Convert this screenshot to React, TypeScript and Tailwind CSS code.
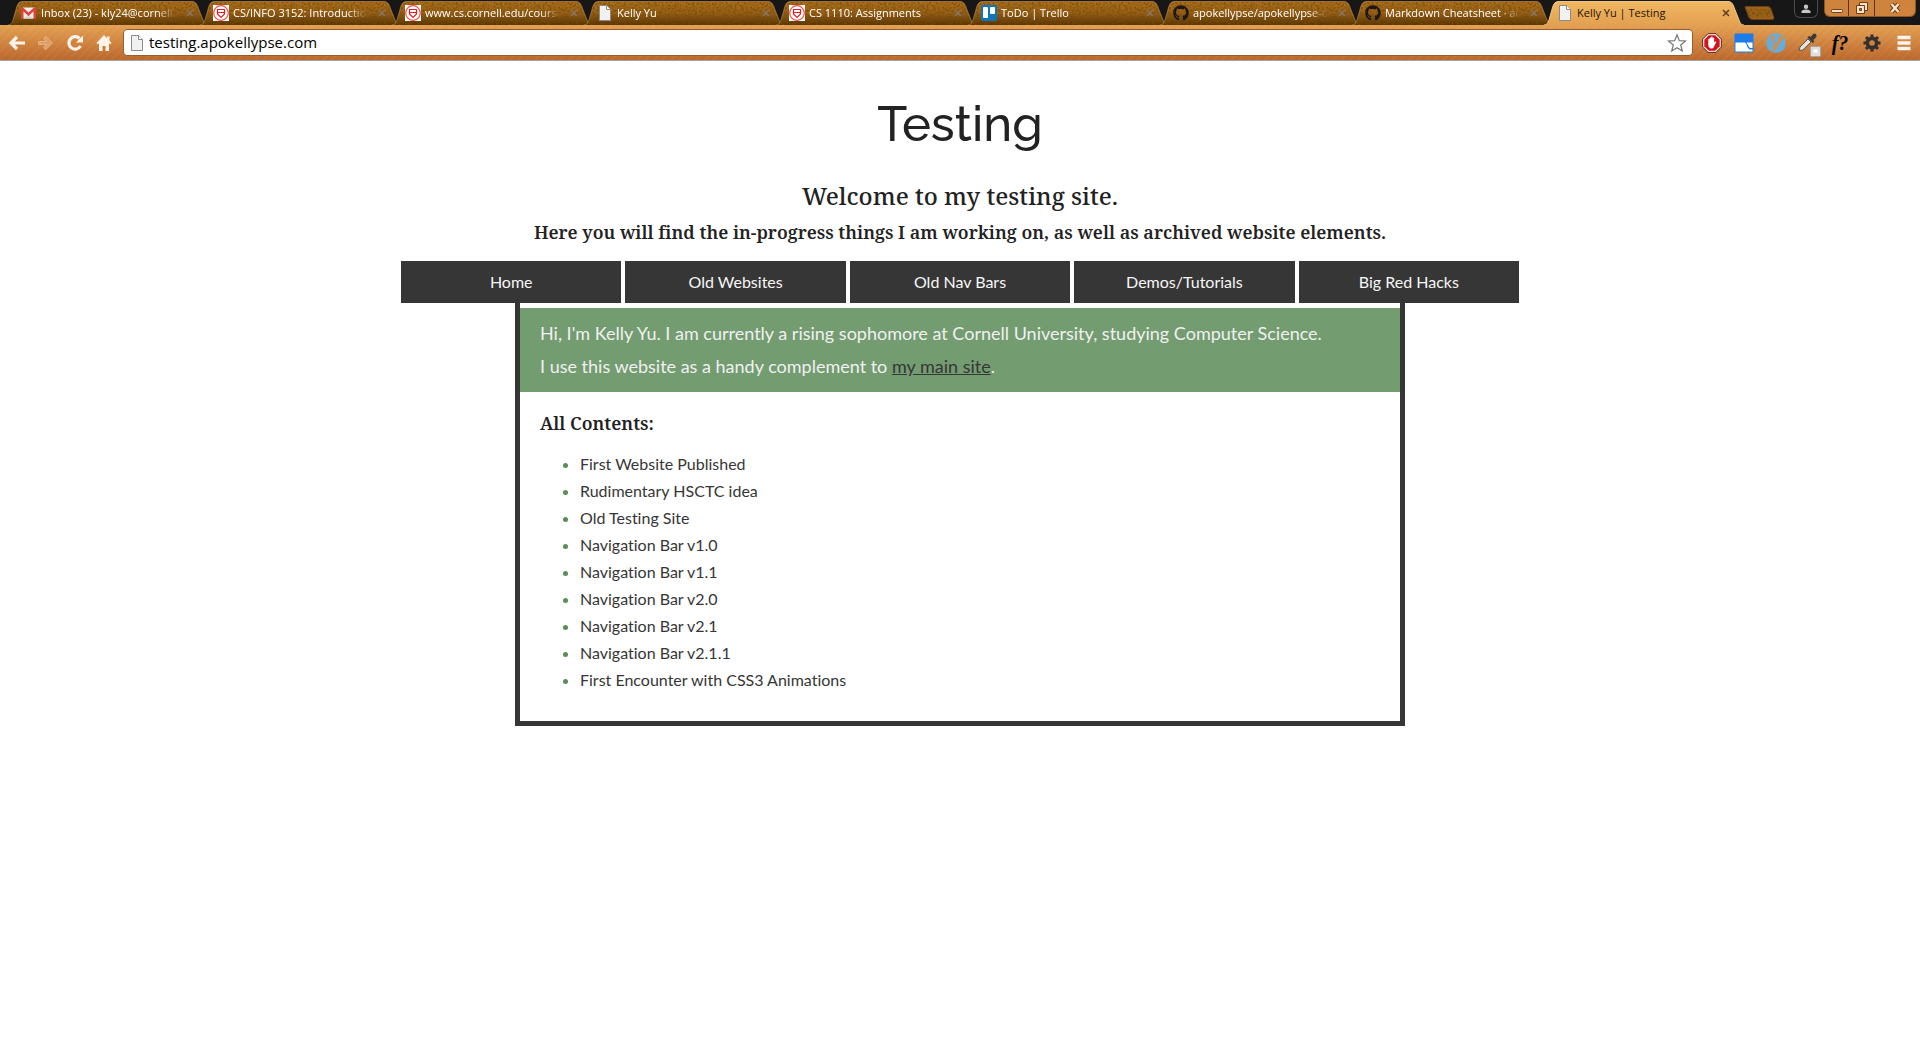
import { useState, type ReactNode } from "react";
import { FaGithub } from "react-icons/fa";

type Kind = "gmail" | "cornell" | "page" | "trello" | "github";

const TABS: { title: string; icon: Kind }[] = [
  { title: "Inbox (23) - kly24@cornell.edu", icon: "gmail" },
  { title: "CS/INFO 3152: Introduction to Game", icon: "cornell" },
  { title: "www.cs.cornell.edu/courses/cs1110", icon: "cornell" },
  { title: "Kelly Yu", icon: "page" },
  { title: "CS 1110: Assignments", icon: "cornell" },
  { title: "ToDo | Trello", icon: "trello" },
  { title: "apokellypse/apokellypse-org", icon: "github" },
  { title: "Markdown Cheatsheet · adam-p", icon: "github" },
  { title: "Kelly Yu | Testing", icon: "page" },
];

const NAV = ["Home", "Old Websites", "Old Nav Bars", "Demos/Tutorials", "Big Red Hacks"];

const CONTENTS = [
  "First Website Published",
  "Rudimentary HSCTC idea",
  "Old Testing Site",
  "Navigation Bar v1.0",
  "Navigation Bar v1.1",
  "Navigation Bar v2.0",
  "Navigation Bar v2.1",
  "Navigation Bar v2.1.1",
  "First Encounter with CSS3 Animations",
];

function PageIcon() {
  return (
    <svg viewBox="0 0 16 16" className="size-4 shrink-0" aria-hidden="true">
      <path d="M2.500 .5h7l4 4v11h-11z" fill="#f1f1f1" stroke="#8a8a8a" />
      <path d="M9.500 .5v4h4" fill="#fff" stroke="#8a8a8a" />
    </svg>
  );
}

function Favicon({ kind }: { kind: Kind }) {
  if (kind === "page") return <PageIcon />;
  if (kind === "github") return <FaGithub className="size-4 shrink-0 text-[#1b1817]" aria-hidden="true" />;
  if (kind === "gmail")
    return (
      <svg viewBox="0 0 16 16" className="size-4 shrink-0" aria-hidden="true">
        <path d="M1 2.5h13v11H1z" fill="#f2eeee" />
        <path d="M3 13.500 7.500 8l4.500 5.500" fill="#dedada" />
        <path d="M0 3.500Q0 2 1.500 2L7.500 7.600 13.500 2Q15 2 15 3.500V14h-2.500V6.500L7.500 11 2.500 6.500V14H0z" fill="#d9453a" />
      </svg>
    );
  if (kind === "trello")
    return (
      <svg viewBox="0 0 16 16" className="size-4 shrink-0" aria-hidden="true">
        <rect width="16" height="16" rx="2" fill="#0f75b5" />
        <rect x="2" y="2" width="5" height="11" rx="1" fill="#fff" />
        <rect x="9" y="2" width="5" height="7" rx="1" fill="#fff" />
      </svg>
    );
  return (
    <svg viewBox="0 0 16 16" className="size-4 shrink-0" aria-hidden="true">
      <rect width="16" height="16" fill="#fff" />
      <circle cx="8" cy="8" r="7.300" fill="#fff" stroke="#f04a48" strokeWidth="1.200" />
      <path d="M4.500 4.500h7v4.500L8 12.500 4.500 9z" fill="#fff" stroke="#e01f22" strokeWidth="1.200" />
      <path d="M4.500 7.500h7" fill="none" stroke="#e01f22" strokeWidth="1.100" />
    </svg>
  );
}

const TAB_SHAPE = "M0 24C3 24 4 22 5 19L9 5Q10.500 0.500 14 0.500H184Q188 0.500 189.500 5L195 19C196 22 197 24 200 24";

function Tab({ title, icon, active, onSelect }: { title: string; icon: Kind; active: boolean; onSelect: () => void }) {
  return (
    <div className={active ? "relative z-10 h-6 w-48 min-w-0" : "relative h-6 w-48 min-w-0"}>
      <svg
        viewBox="0 0 200 24"
        preserveAspectRatio="none"
        className="absolute top-0 left-0 h-6 w-[calc(100%+8px)]"
        aria-hidden="true"
      >
        <path d={TAB_SHAPE} fill={active ? "url(#tab-active)" : "url(#tab-idle)"} />
        {!active && (
          <g clipPath="url(#tab-clip)">
            <rect width="200" height="24" filter="url(#grain)" opacity="0.8" />
          </g>
        )}
        <path
          d={TAB_SHAPE}
          fill="none"
          stroke={active ? "#f8cf93" : "#c08c50"}
          strokeOpacity={active ? 0.9 : 0.6}
        />
      </svg>
      <div className="relative flex h-full items-center gap-1 pr-0 pl-[13px]">
        <Favicon kind={icon} />
        <button
          type="button"
          onClick={onSelect}
          className={
            active
              ? "min-w-0 flex-1 overflow-hidden text-left text-[11px] leading-5 whitespace-nowrap text-[#241505]"
              : "min-w-0 flex-1 overflow-hidden mask-r-from-85% mask-r-to-100% text-left text-[11px] leading-5 whitespace-nowrap text-white"
          }
        >
          {title}
        </button>
        <button type="button" aria-label={`Close ${title}`} className="flex w-5 justify-center">
          <svg viewBox="0 0 8 8" className="size-2" aria-hidden="true">
            <path d="M1 1l6 6M7 1l-6 6" stroke={active ? "#5c4024" : "#857565"} strokeWidth="1.600" />
          </svg>
        </button>
      </div>
    </div>
  );
}

function ToolButton({ label, children }: { label: string; children: ReactNode }) {
  return (
    <button type="button" aria-label={label} className="flex size-5 shrink-0 items-center justify-center">
      {children}
    </button>
  );
}

function BrowserChrome() {
  const [current, setCurrent] = useState(8);
  return (
    <header className="font-['Open_Sans',sans-serif]">
      <svg className="absolute size-0" aria-hidden="true">
        <defs>
          <linearGradient id="tab-idle" x1="0" y1="0" x2="0" y2="1">
            <stop offset="0" stopColor="#b0701f" />
            <stop offset="0.500" stopColor="#9a5e1a" />
            <stop offset="1" stopColor="#573007" />
          </linearGradient>
          <linearGradient id="tab-active" x1="0" y1="0" x2="0" y2="1">
            <stop offset="0" stopColor="#f1b760" />
            <stop offset="1" stopColor="#e3a052" />
          </linearGradient>
          <clipPath id="tab-clip">
            <path d={TAB_SHAPE} />
          </clipPath>
          <filter id="grain" x="0" y="0" width="1" height="1">
            <feTurbulence type="fractalNoise" baseFrequency="0.450" numOctaves="2" seed="4" />
            <feColorMatrix values="0 0 0 0 0.160  0 0 0 0 0.080  0 0 0 0 0  2.600 0 0 0 -1" />
          </filter>
        </defs>
      </svg>

      <div className="flex h-[25px] items-start bg-[#171717] pl-2">
        <div className="flex min-w-0 pt-px">
          {TABS.map((tab, i) => (
            <Tab key={i} {...tab} active={i === current} onSelect={() => setCurrent(i)} />
          ))}
        </div>
        <button type="button" aria-label="New tab" className="mt-1.5 ml-2 shrink-0">
          <svg viewBox="0 0 31 14" className="h-3.5 w-[31px]" aria-hidden="true">
            <path d="M1 1Q1 .5 2 .5H24Q26 .5 27 3L30 12Q30 13.500 28 13.500H9Q6 13.500 5 11.500Z" fill="#9a601c" stroke="#6d4310" />
            <path d="M3 3h21l3 8H7z" filter="url(#grain)" opacity="0.700" />
          </svg>
        </button>
        <div className="ml-auto flex shrink-0 pr-1">
          <button
            type="button"
            aria-label="Profile"
            className="mr-1.5 flex h-[18px] w-6 items-center justify-center rounded-b-md border border-t-0 border-[#4c4c4c] bg-[#161616]"
          >
            <svg viewBox="0 0 10 10" className="size-2.5" aria-hidden="true">
              <circle cx="5" cy="2.700" r="2.200" fill="#c6c6c6" />
              <path d="M.5 9V7.500Q1 5.500 5 5.500t4.500 2V9z" fill="#c6c6c6" />
            </svg>
          </button>
          <div className="flex h-[17px] overflow-hidden rounded-b-md border border-t-0 border-[#8d5425] bg-[#cf843e]">
            <button type="button" aria-label="Minimize" className="flex w-6 items-center justify-center border-r border-[#5b3516]">
              <svg viewBox="0 0 12 12" className="size-3" aria-hidden="true">
                <rect x=".5" y="7.500" width="11" height="3" rx="1" fill="#f9e3c9" stroke="#6a3f1d" />
              </svg>
            </button>
            <button type="button" aria-label="Restore" className="flex w-[26px] items-center justify-center border-r border-[#5b3516]">
              <svg viewBox="0 0 14 14" className="size-3.5" aria-hidden="true">
                <path d="M4.500 1.500h8v8h-8z" fill="#f9e3c9" stroke="#6a3f1d" />
                <path d="M1.500 4.500h8v8h-8z" fill="#f9e3c9" stroke="#6a3f1d" />
                <path d="M4.500 7.500h2v2h-2z" fill="#cf843e" stroke="#6a3f1d" />
              </svg>
            </button>
            <button type="button" aria-label="Close window" className="flex w-10 items-center justify-center">
              <svg viewBox="0 0 12 12" className="size-3" aria-hidden="true">
                <path d="M2.500 2 9.500 10M9.500 2 2.500 10" stroke="#6a3f1d" strokeWidth="4.200" />
                <path d="M2.500 2 9.500 10M9.500 2 2.500 10" stroke="#f9e3c9" strokeWidth="2.400" />
              </svg>
            </button>
          </div>
        </div>
      </div>

      <div className="flex h-9 items-center border-b border-[#a8a09a] bg-[repeating-linear-gradient(135deg,rgba(255,255,255,0.04)_0px,rgba(255,255,255,0.04)_2px,transparent_2px,transparent_6px),linear-gradient(#e3a052,#bb672c)] pr-1.5 pl-[7px]">
        <div className="flex shrink-0 gap-[9px] pr-[9px]">
          <ToolButton label="Back">
            <svg viewBox="0 0 20 20" className="size-5" aria-hidden="true">
              <path d="M10 4 4 10l6 6M4 10h14" fill="none" stroke="#fdf3ea" strokeWidth="3.200" />
            </svg>
          </ToolButton>
          <ToolButton label="Forward">
            <svg viewBox="0 0 20 20" className="size-5" aria-hidden="true">
              <path d="M2.500 8.500h8l-3-3 2.200-2.200 6.800 6.700-6.800 6.700-2.200-2.200 3-3h-8z" fill="#dd9f66" stroke="#e6b383" />
            </svg>
          </ToolButton>
          <ToolButton label="Reload">
            <svg viewBox="0 0 20 20" className="size-5" aria-hidden="true">
              <path d="M15.500 13A6.200 6.200 0 1 1 14.500 5.500" fill="none" stroke="#fdf3ea" strokeWidth="3.200" />
              <path d="M18 2.500V9.500H11z" fill="#fdf3ea" />
            </svg>
          </ToolButton>
          <ToolButton label="Home">
            <svg viewBox="0 0 20 20" className="size-5" aria-hidden="true">
              <path d="M10 2 2.500 10l1.200 1.200L5 10v8h3.500v-5h3v5H15v-8l1.300 1.200L17.500 10 15.500 7.800V3.500H13v1.700z" fill="#fdf3ea" />
            </svg>
          </ToolButton>
        </div>
        <div className="flex h-[27px] min-w-0 flex-1 items-center gap-1 rounded-sm border border-[#9a5c2c] bg-white px-[5px]">
          <PageIcon />
          <input
            type="text"
            aria-label="Address"
            defaultValue="testing.apokellypse.com"
            className="min-w-0 flex-1 bg-transparent pb-0.5 text-[15px] leading-5 text-black outline-none"
          />
          <button type="button" aria-label="Bookmark this page" className="shrink-0">
            <svg viewBox="0 0 20 20" className="size-5" aria-hidden="true">
              <path d="M10 1.800l2.300 5.800 6.200.4-4.800 4 1.600 6L10 14.700 4.700 18l1.600-6-4.800-4 6.200-.4z" fill="#fff" stroke="#777" strokeWidth="1.200" />
            </svg>
          </button>
        </div>
        <div className="flex shrink-0 gap-3 pl-[9px]">
          <ToolButton label="AdBlock">
            <svg viewBox="0 0 20 20" className="size-5" aria-hidden="true">
              <path d="M6 .7h8L19.300 6v8L14 19.300H6L.7 14V6z" fill="#fff" stroke="#5d2018" />
              <path d="M6.700 2.300h6.600l4.400 4.400v6.600l-4.400 4.400H6.700l-4.400-4.400V6.700z" fill="#d3151b" />
              <path d="M6.300 6.200q.7-.7 1.300 0V5q.7-.9 1.400 0V4q.8-.9 1.600 0v1q.8-.8 1.500 0v4.500l1.200-1.200q1 0 .9 1l-2.400 4.700q-.5 1.500-2 1.500H8.500Q6.300 15 6.300 12z" fill="#fff" />
            </svg>
          </ToolButton>
          <ToolButton label="Window resizer">
            <svg viewBox="0 0 20 20" className="size-5" aria-hidden="true">
              <rect x=".5" y=".5" width="19" height="19" rx="1" fill="#1c7cee" />
              <path d="M1.500 9.500h9q1.500 0 2 2t2 4q.8 1 2 1h2v2h-17z" fill="#fff" />
              <path d="M12.500 9.500h6v5.500h-2q-1.200 0-2-2z" fill="#fff" />
            </svg>
          </ToolButton>
          <ToolButton label="Vimium">
            <svg viewBox="0 0 20 20" className="size-5" aria-hidden="true">
              <circle cx="10" cy="10" r="9.800" fill="#62aee0" />
              <path d="M4 3.500h5.500v2H8.300l.4 7.500L13.500 5.500H12v-2h5.500v2L9 17.500H6.500L5.300 5.500H4z" fill="#cf8d52" />
              <path d="M6.500 5.500h.6l.6 9.500" fill="none" stroke="#62aee0" strokeWidth=".8" />
            </svg>
          </ToolButton>
          <ToolButton label="Color picker">
            <svg viewBox="0 0 20 20" className="size-5 overflow-visible" aria-hidden="true">
              <path d="M1 17.500 2 14l8-8 3 3-8.200 8z" fill="#e6e2dc" stroke="#565656" />
              <path d="M9.500 4.500 11 3l1.500 1L15 1.200q2-1.400 3.200.2 1 1.500-.3 3L15.300 7l1 1.500-1.500 1.500z" fill="#3a3a3a" />
              <rect x="12.500" y="13.500" width="10" height="10" rx="1" fill="#dedede" stroke="#a5a5a5" />
              <rect x="15.500" y="16.500" width="4" height="3" fill="#fff" />
            </svg>
          </ToolButton>
          <ToolButton label="WhatFont">
            <span className="font-['Liberation_Serif',serif] text-xl leading-5 font-bold text-black italic">f?</span>
          </ToolButton>
          <ToolButton label="Settings">
            <svg viewBox="0 0 20 20" className="size-5" aria-hidden="true">
              <circle cx="10" cy="10" r="4.600" fill="none" stroke="#33302d" strokeWidth="3.600" />
              <path
                d="M10 1.500v3M10 15.500v3M1.500 10h3M15.500 10h3M4 4l2.100 2.100M13.900 13.900 16 16M16 4l-2.100 2.100M6.100 13.900 4 16"
                stroke="#33302d"
                strokeWidth="3"
              />
            </svg>
          </ToolButton>
          <ToolButton label="Menu">
            <svg viewBox="0 0 20 20" className="size-5" aria-hidden="true">
              <path d="M3.500 4.500h13M3.500 10h13M3.500 15.500h13" stroke="#fdf3ea" strokeWidth="3.400" />
            </svg>
          </ToolButton>
        </div>
      </div>
    </header>
  );
}

export default function App() {
  return (
    <div className="min-h-screen bg-white">
      <BrowserChrome />
      <main className="flex flex-col items-center pt-7 font-[Lato,sans-serif] text-[#222222] [font-variant-ligatures:no-common-ligatures]">
        <h1 className="font-[Raleway,Lato,sans-serif] text-[49px] leading-[70px] font-medium">Testing</h1>
        <h3 className="mt-[19px] font-['Noto_Serif','DejaVu_Serif',serif] text-2xl leading-9 font-medium">
          Welcome to my testing site.
        </h3>
        <h4 className="font-['Noto_Serif','DejaVu_Serif',serif] text-lg leading-9 font-semibold">
          Here you will find the in-progress things I am working on, as well as archived website elements.
        </h4>

        <nav className="mt-[11px] flex w-full max-w-[1118px] gap-1">
          {NAV.map((label) => (
            <a
              key={label}
              href="#"
              className="flex-1 bg-[#363636] text-center text-base leading-[42px] text-[#f7f7f7]"
            >
              {label}
            </a>
          ))}
        </nav>

        <section className="w-full max-w-[890px] border-x-[5px] border-b-[5px] border-[#363636] pt-[5px] pb-7">
          <div className="bg-[#749c71] px-5 py-[9px] text-lg leading-[33px] text-[#f0f0f0]">
            <p>Hi, I'm Kelly Yu. I am currently a rising sophomore at Cornell University, studying Computer Science.</p>
            <p>
              I use this website as a handy complement to{" "}
              <a href="#" className="text-[#363636] underline">
                my main site
              </a>
              .
            </p>
          </div>
          <h4 className="mt-[17px] px-5 font-['Noto_Serif','DejaVu_Serif',serif] text-lg leading-7 font-semibold">
            All Contents:
          </h4>
          <ul className="mt-[13px] list-disc pl-[60px] text-base leading-[27px] marker:text-[#5c8c57]">
            {CONTENTS.map((item) => (
              <li key={item}>
                <a href="#" className="text-[#363636]">
                  {item}
                </a>
              </li>
            ))}
          </ul>
        </section>
      </main>
    </div>
  );
}
